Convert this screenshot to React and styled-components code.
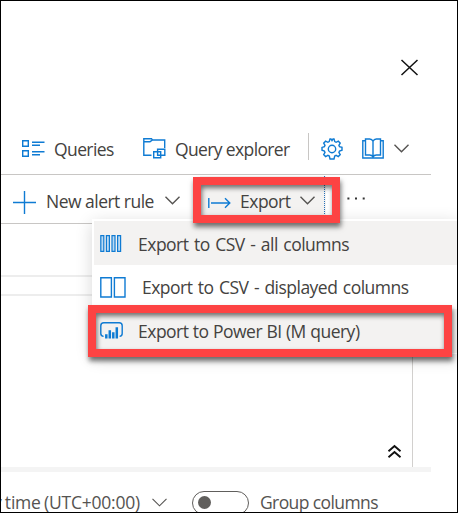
import React from "react";
import styled, { createGlobalStyle } from "styled-components";

const Global = createGlobalStyle`
  * { box-sizing: border-box; }
  body { margin: 0; background: #fff; overflow: hidden; }
`;

const Window = styled.div`
  position: relative;
  width: 458px;
  height: 513px;
  overflow: hidden;
  border: 1px solid #000;
  background: #fff;
  color: #444240;
  font-family: "Open Sans", "Noto Sans", sans-serif;
  font-size: 17.5px;
  display: flex;
  flex-direction: column;
`;

const Header = styled.header`
  height: 121px;
  flex: none;
  display: flex;
  justify-content: flex-end;
  padding: 58px 39px 0 0;
`;

const Bar = styled.div`
  display: flex;
  align-items: center;
  flex: none;
  height: ${(p) => p.$height}px;
  width: 430px;
  padding-left: ${(p) => p.$pad}px;
  border-bottom: 1px solid #c8c6c4;
`;

const Icon = styled.svg`
  display: block;
  flex: none;
  overflow: visible;
  fill: none;
  stroke: ${(p) => p.$color || "#0f7bd3"};
  stroke-width: ${(p) => p.$weight || 1.4};
  margin-left: ${(p) => p.$gap || 0}px;
  margin-top: ${(p) => p.$drop || 0}px;
`;

const Label = styled.span`
  display: block;
  flex: none;
  white-space: pre;
  line-height: 24px;
  font-weight: 370;
  width: ${(p) => (p.$width ? `${p.$width}px` : "auto")};
  margin-left: ${(p) => p.$gap || 0}px;
  margin-top: ${(p) => p.$drop || 0}px;
  letter-spacing: ${(p) => p.$track || 0}px;
  word-spacing: ${(p) => p.$space || 0}px;
`;

const Divider = styled.div`
  width: 1px;
  height: 27px;
  margin: -3px 0 0 17px;
  background: #c8c6c4;
`;

const ExportButton = styled.button`
  display: flex;
  align-items: center;
  flex: none;
  width: 132px;
  height: 46px;
  margin: 0 0 0 20px;
  padding: 0 0 0 8px;
  border: 0;
  border-right: 6px solid #fff;
  background: #f3f2f1;
  color: inherit;
  font: inherit;
`;

const FocusEdge = styled.div`
  height: 46px;
  margin-left: 9px;
  border-left: 1px dotted #2870b8;
`;

const Editor = styled.section`
  flex: none;
  width: 412px;
  height: 243px;
  border-right: 1px solid #d2d0ce;
  display: flex;
  flex-direction: column;
`;

const Rule = styled.div`
  height: 2px;
  flex: none;
  background: #ededed;
  margin-top: ${(p) => p.$top}px;
`;

const Collapse = styled.div`
  margin: auto 11px 9px auto;
`;

const Splitter = styled.div`
  flex: none;
  width: 430px;
  height: 5px;
  background: #f4f4f4;
`;

const Footer = styled.footer`
  display: flex;
  align-items: center;
  flex: none;
  height: 60px;
  color: #555351;
`;

const Toggle = styled.div`
  flex: none;
  width: 57px;
  height: 24px;
  margin: 2px 0 0 25px;
  padding: 4px 5px;
  border: 1px solid #605e5c;
  border-radius: 12px;
`;

const Knob = styled.div`
  width: 13px;
  height: 13px;
  border-radius: 50%;
  background: #605e5c;
`;

const Menu = styled.div`
  position: absolute;
  left: 91px;
  top: 218px;
  width: 366px;
  padding: 2px 0 1px 2px;
  background: #fff;
  box-shadow: 0 4px 16px rgba(0, 0, 0, 0.16);
`;

const MenuItem = styled.div`
  display: flex;
  align-items: center;
  height: 44px;
  padding-left: 6px;
  background: ${(p) => (p.$shaded ? "#f3f2f1" : "#fff")};
`;

const Highlight = styled.div`
  position: absolute;
  left: ${(p) => p.$x}px;
  top: ${(p) => p.$y}px;
  width: ${(p) => p.$w}px;
  height: ${(p) => p.$h}px;
  border: 8px solid #fd4343;
  box-shadow: 1px 4px 5px rgba(0, 0, 0, 0.55), inset 1px 3px 5px rgba(0, 0, 0, 0.55);
`;

const Chevron = ({ gap, drop, weight = 1.4 }) => (
  <Icon width="15" height="9" viewBox="0 0 15 9" $color="#555351" $weight={weight} $gap={gap} $drop={drop}>
    <path d="M.5 .8 7.5 7.8 14.5 .8" />
  </Icon>
);

export default function App() {
  return (
    <>
      <Global />
      <Window>
        <Header>
          <Icon width="17" height="17" viewBox="0 0 17 17" $color="#111" $weight={1.5}>
            <path d="M.5 1 16.5 16M16.5 1 .5 16" />
          </Icon>
        </Header>
        <Bar $height={53} $pad={21}>
          <Icon width="23" height="17" viewBox="0 0 23 17">
            <path d="M.7 .7h5.6v5.6H.7zM.7 10.7h5.6v5.6H.7zM10 2.2h12.5M10 5.3h8M10 11.7h12.5M10 14.7h8" />
          </Icon>
          <Label $gap={9} $width={60} $track={-0.6} $drop={1}>Queries</Label>
          <Icon width="23" height="21" viewBox="0 0 23 21" $gap={29} $drop={1}>
            <path d="M8.5 17.2H.8V.8h7.7L9.5 2H21.7v8M.8 3.7H7L9.5 2" />
            <path d="M10.7 13.8h7v6h-7zM14.6 11.2h7.2v6.1h-7.2z" />
          </Icon>
          <Label $gap={9} $width={116} $track={-0.63} $drop={1}>Query explorer</Label>
          <Divider />
          <Icon width="22" height="22" viewBox="0 0 22 22" $gap={12} $drop={1}>
            <path d="M9 1h1l1 1.6L12 1h1l.8 2.6 1.3.7 2.2-1.1 1.9 1.9-1.3 2.2.6 1.4 2.5.7v2.8l-2.5.8-.6 1.4 1.3 2.3-1.9 1.9-2.2-1.2-1.4.6L13 21H9l-.7-2.9-1.4-.7-2.3 1.2-1.9-1.9L4 14.4 3.4 13 1 12.2V9.4l2.4-.7L4 7.3 2.7 5.1l1.9-1.9 2.3 1.1 1.3-.7z" />
            <circle cx="11" cy="11" r="3.7" />
          </Icon>
          <Icon width="22" height="21" viewBox="0 0 22 21" $gap={19}>
            <path d="M3.5 2.8H.8V20h20.4V2.8h-2.7M3.5 1h4.2Q10 1 11 3.2 12 1 14.3 1h4.2v16h-4.2q-2.3 0-3.3 2-1-2-3.3-2H3.5zM11 3.2V19" />
          </Icon>
          <Chevron gap={10} />
        </Bar>
        <Bar $height={49} $pad={12}>
          <Icon width="23" height="23" viewBox="0 0 23 23" $drop={7}>
            <path d="M11.5 0v23M0 11.5h23" />
          </Icon>
          <Label $gap={10} $width={109} $track={-0.52} $drop={3}>New alert rule</Label>
          <Chevron gap={10} drop={2} />
          <ExportButton>
            <Icon width="23" height="11" viewBox="0 0 23 11" $drop={6}>
              <path d="M.8 1v10M3 6h18.5M17 1.2 21.8 6 17 10.8" />
            </Icon>
            <Label $gap={9} $width={50} $track={-0.5} $drop={3}>Export</Label>
            <Chevron gap={10} drop={2} />
            <FocusEdge />
          </ExportButton>
          <Icon width="18" height="2" viewBox="0 0 18 2" $gap={14} $color="none">
            <path fill="#333" d="M1.4 -.6h2v2h-2zM9 -.6h2v2H9zM16.7 -.6h2v2h-2z" />
          </Icon>
        </Bar>
        <Editor>
          <Rule $top={51} />
          <Rule $top={17} />
          <Collapse>
            <Icon width="13" height="13" viewBox="0 0 13 13" $color="#111" $weight={1.9}>
              <path d="M.5 6.2 6.5 1l6 5.2M.5 12.2l6-5.2 6 5.2" />
            </Icon>
          </Collapse>
        </Editor>
        <Splitter />
        <Footer>
          <Label $gap={-8} $width={149} $track={-0.22} $space={-1}>y time (UTC+00:00)</Label>
          <Chevron gap={10} weight={1.1} />
          <Toggle><Knob /></Toggle>
          <Label $gap={11} $width={118} $track={-0.6}>Group columns</Label>
        </Footer>
        <Menu>
          <MenuItem $shaded>
            <Icon width="22" height="17" viewBox="0 0 22 17" $weight={1.2}>
              <path fill="#b9daf4" d="M.8 .7h3v15.6h-3zM6.4 .7h3v15.6h-3zM12 .7h3v15.6h-3zM17.6 .7h3v15.6h-3z" />
            </Icon>
            <Label $gap={16} $track={-0.5} $space={1.4} $drop={1}>Export to CSV - all columns</Label>
          </MenuItem>
          <MenuItem>
            <Icon width="26" height="21" viewBox="0 0 26 21">
              <path d="M.8 .8h10.6v19.2H.8zM14.4 .8H25v19.2H14.4z" />
            </Icon>
            <Label $gap={16} $track={-0.52} $space={1.4}>Export to CSV - displayed columns</Label>
          </MenuItem>
          <MenuItem $shaded>
            <Icon width="23" height="17" viewBox="0 0 23 17" $drop={-2}>
              <path d="M3.6 14.4Q.8 14.2 .8 11.5V3.8Q.8 .8 3.8 .8h15.4q3 0 3 3v7.7q0 2.7-2.6 2.9" />
              <path strokeWidth="2.5" d="M6.3 16.5v-4.3M9.8 16.5V8.2M13.3 16.5v-6.3M16.8 16.5V5.3" />
            </Icon>
            <Label $gap={15} $track={-0.5} $space={0.3}>Export to Power BI (M query)</Label>
          </MenuItem>
        </Menu>
        <Highlight $x={192} $y={176} $w={147} $h={46} />
        <Highlight $x={87} $y={304} $w={364} $h={52} />
      </Window>
    </>
  );
}
